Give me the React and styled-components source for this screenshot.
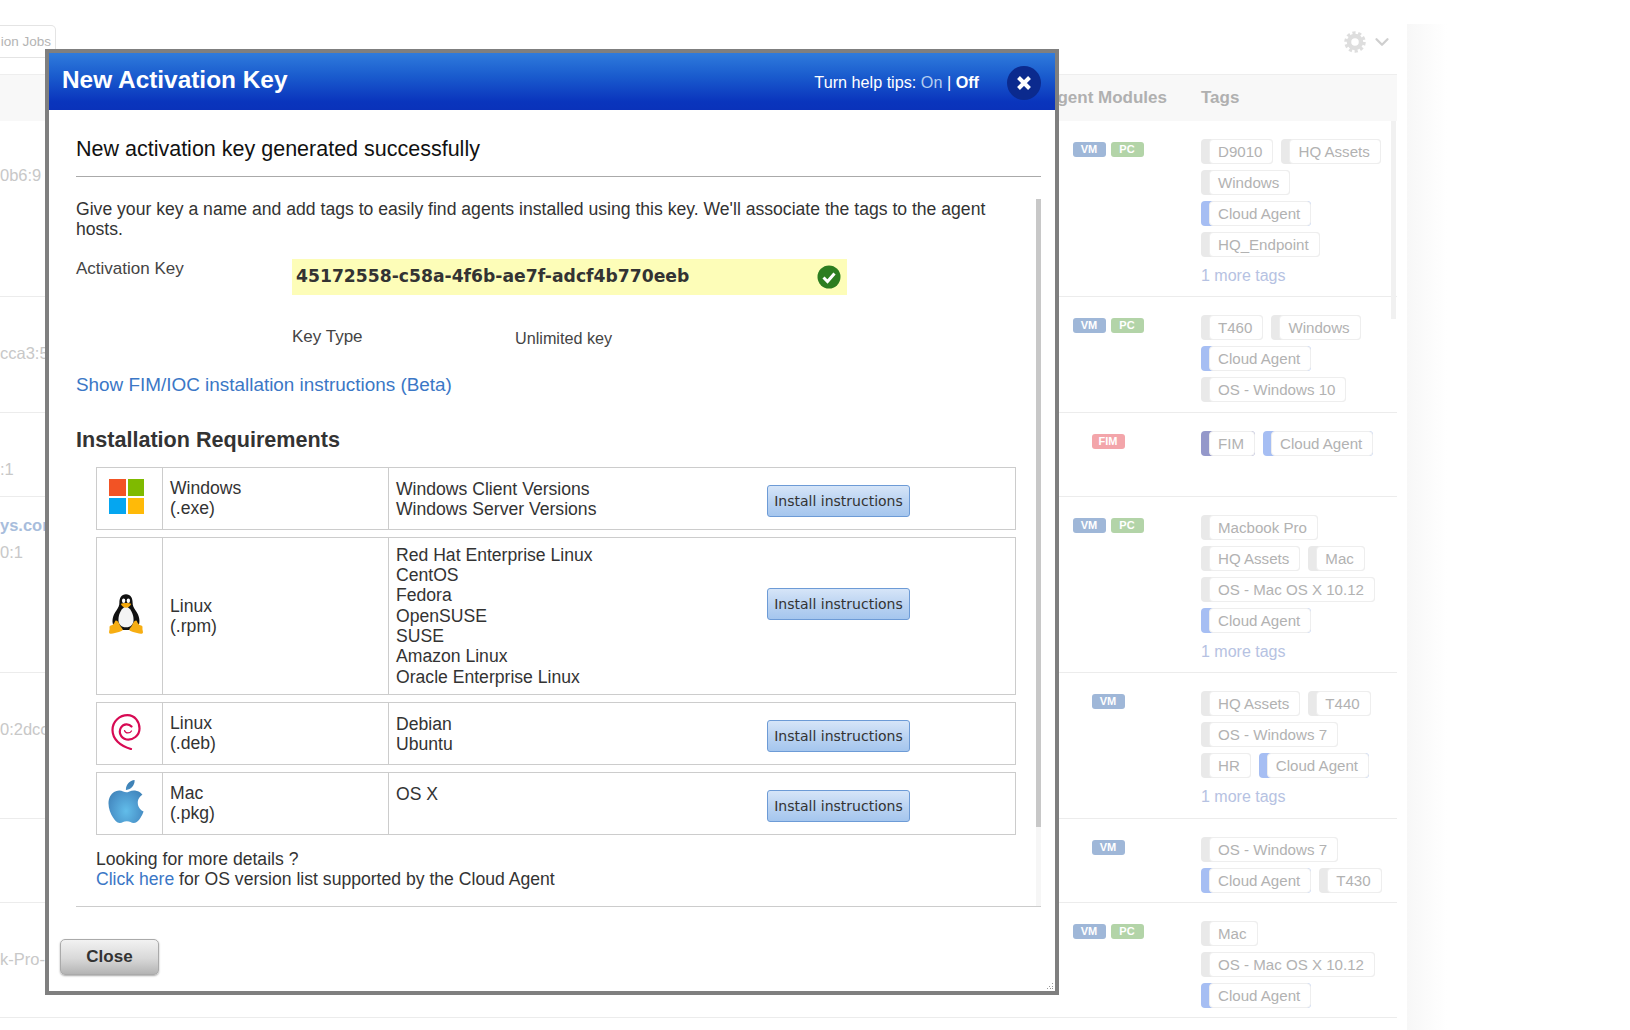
import React from 'react';
import styled, { createGlobalStyle } from 'styled-components';
import { ChevronDown } from 'lucide-react';

const GlobalStyle = createGlobalStyle`
  html, body {
    margin: 0;
    padding: 0;
    background: #fff;
    overflow: hidden;
  }
  body {
    font-family: "Liberation Sans", Arial, sans-serif;
  }
`;

const Page = styled.div`
  position: relative;
  display: flex;
  width: 1630px;
  height: 1030px;
  overflow: hidden;
`;

const Main = styled.div`
  position: relative;
  width: 1397px;
  flex-shrink: 0;
`;

const SideStrip = styled.div`
  width: 40px;
  margin: 24px 0 0 10px;
  background: linear-gradient(90deg, #f7f7f7, #fff);
`;

const TabBar = styled.div`
  display: flex;
  justify-content: space-between;
  height: 57px;
  padding-top: 25px;
  box-sizing: border-box;
`;

const TabStub = styled.div`
  width: 56px;
  height: 33px;
  box-sizing: border-box;
  border: 1px solid #e4e4e4;
  border-left: 0;
  border-radius: 0 5px 0 0;
  font-size: 13.5px;
  line-height: 31px;
  color: #b4b4b4;
  white-space: nowrap;
  text-align: right;
  padding-right: 4px;
  overflow: hidden;
`;

const Tools = styled.div`
  display: flex;
  align-items: center;
  gap: 5px;
  height: 24px;
  padding: 5px 4px 0 0;
`;

const TableHead = styled.div`
  display: grid;
  grid-template-columns: 45px 975px 181px 1fr;
  height: 47px;
  margin-top: 17px;
  align-items: center;
  box-sizing: border-box;
  background: #f8f8f8;
  border-top: 1px solid #eee;
  font-size: 17px;
  font-weight: bold;
  color: #b0b0b0;
`;

const ModulesHead = styled.div`
  grid-column: 3;
  text-align: right;
  padding-right: 34px;
  white-space: nowrap;
`;

const Row = styled.div`
  display: grid;
  grid-template-columns: 45px 975px 181px 1fr;
  height: ${(p) => p.$height}px;
  box-sizing: border-box;
  border-bottom: 1px solid #ececec;
`;

const HostCell = styled.div`
  grid-column: 1;
  padding-top: ${(p) => p.$top}px;
  font-size: 16.5px;
  line-height: 20px;
  color: #c8c8c8;
  white-space: nowrap;
`;

const HostLink = styled.div`
  color: #a8bddc;
  font-weight: bold;
  margin-bottom: 7px;
`;

const ModulesCell = styled.div`
  grid-column: 3;
  display: flex;
  justify-content: center;
  gap: 5px;
  padding: 21px 5px 0 0;
`;

const Badge = styled.span`
  width: 33px;
  height: 15px;
  border-radius: 3px;
  background: ${(p) => p.$bg};
  color: #fff;
  font-size: 11px;
  font-weight: bold;
  line-height: 15px;
  text-align: center;
`;

const TagsCell = styled.div`
  grid-column: 4;
  padding-top: 18px;
`;

const TagLine = styled.div`
  display: flex;
  gap: 8px;
  height: 31px;
`;

const Tag = styled.span`
  height: 25px;
  padding-left: 8px;
  border-radius: 4px;
  background: ${(p) => p.$bar || '#e9e9e9'};
`;

const TagBody = styled.span`
  display: block;
  height: 25px;
  box-sizing: border-box;
  border: 1px solid #eee;
  border-radius: 4px;
  background: #fff;
  padding: 0 10px 0 8px;
  font-size: 15.1px;
  line-height: 23px;
  color: #b2b2b2;
  white-space: nowrap;
`;

const MoreTags = styled.div`
  margin-top: 2px;
  font-size: 16px;
  line-height: 22px;
  color: #b6c2e2;
`;

const PageScroll = styled.div`
  position: absolute;
  right: 1px;
  top: 121px;
  width: 5px;
  height: 198px;
  background: #f1f1f1;
`;

const Modal = styled.div`
  position: absolute;
  left: 45px;
  top: 49px;
  width: 1014px;
  height: 946px;
  box-sizing: border-box;
  border: 4px solid #7f7f7f;
  background: #fff;
  display: flex;
  flex-direction: column;
  color: #333;
`;

const ModalHeader = styled.div`
  display: flex;
  align-items: center;
  height: 57px;
  flex-shrink: 0;
  padding: 0 14px 0 13px;
  background: linear-gradient(180deg, #2f7bdc 0%, #1a5cce 40%, #0a35bd 85%, #0a32ba 100%);
  color: #fff;
`;

const ModalTitle = styled.div`
  flex: 1;
  font-size: 24.4px;
  font-weight: bold;
  position: relative;
  top: -2px;
`;

const HelpTips = styled.div`
  font-size: 16.2px;
  margin-right: 28px;
  position: relative;
  top: 1px;
`;

const HelpOn = styled.span`
  color: #b4cdf0;
`;

const HelpOff = styled.b`
  color: #fff;
`;

const CloseRound = styled.div`
  width: 34px;
  height: 34px;
  border-radius: 50%;
  background: #0b2a8e;
  display: flex;
  align-items: center;
  justify-content: center;
  position: relative;
  top: 1px;
`;

const SuccessHeading = styled.div`
  height: 66px;
  flex-shrink: 0;
  margin-left: 27px;
  padding-top: 21px;
  box-sizing: border-box;
  font-size: 21.5px;
  line-height: 36px;
  color: #111;
`;

const ScrollArea = styled.div`
  display: flex;
  height: 731px;
  flex-shrink: 0;
  margin: 0 14px 0 27px;
  box-sizing: border-box;
  border-top: 1px solid #aaa;
  border-bottom: 1px solid #ccc;
`;

const ScrollContent = styled.div`
  flex: 1;
  padding-top: 22px;
  font-size: 17.6px;
  line-height: 20.3px;
`;

const Scrollbar = styled.div`
  width: 5px;
  margin-top: 22px;
  background: #f6f6f6;
`;

const ScrollThumb = styled.div`
  height: 628px;
  background: #c8c8c8;
`;

const Intro = styled.p`
  margin: 0;
  padding-right: 20px;
`;

const KeyRow = styled.div`
  display: flex;
  margin-top: 19px;
`;

const KeyLabel = styled.div`
  width: 216px;
  font-size: 17px;
  color: #444;
`;

const KeyBox = styled.div`
  display: flex;
  align-items: center;
  justify-content: space-between;
  width: 555px;
  height: 36px;
  box-sizing: border-box;
  padding: 0 6px 0 4px;
  background: #fdfdb8;
  font-family: "DejaVu Sans", sans-serif;
  font-size: 17.2px;
  font-weight: bold;
  color: #333;
`;

const TypeRow = styled.div`
  display: flex;
  margin: 32px 0 0 216px;
`;

const TypeLabel = styled.div`
  width: 223px;
  font-size: 17px;
  color: #444;
`;

const TypeValue = styled.div`
  padding-top: 1px;
  font-size: 16.2px;
  color: #444;
`;

const BetaLink = styled.a`
  display: block;
  margin-top: 26px;
  font-size: 18.9px;
  line-height: 22px;
  color: #3b77c6;
`;

const SectionTitle = styled.div`
  margin-top: 31px;
  font-size: 21.6px;
  line-height: 26px;
  font-weight: bold;
  color: #333;
`;

const ReqList = styled.div`
  display: flex;
  flex-direction: column;
  gap: 7px;
  margin: 14px 20px 0 20px;
`;

const ReqRow = styled.div`
  display: grid;
  grid-template-columns: 66px 226px 1fr;
  box-sizing: border-box;
  border: 1px solid #ccc;
  min-height: ${(p) => p.$height}px;
`;

const IconCell = styled.div`
  display: flex;
  align-items: center;
  justify-content: center;
  padding: 0 7px 3px 0;
  border-right: 1px solid #ccc;
`;

const NameCell = styled.div`
  display: flex;
  flex-direction: column;
  justify-content: center;
  padding-left: 7px;
  border-right: 1px solid #ccc;
`;

const VersionCell = styled.div`
  display: flex;
  align-items: flex-start;
  padding: ${(p) => p.$top}px 0 0 7px;
`;

const Versions = styled.div`
  width: 371px;
`;

const InstallButton = styled.button`
  width: 143px;
  height: 32px;
  margin-top: ${(p) => p.$offset}px;
  box-sizing: border-box;
  border: 1px solid #6d9bd6;
  border-radius: 3px;
  background: linear-gradient(180deg, #d6e5f8 0%, #b9d2f1 55%, #a5c6ee 100%);
  font-family: "DejaVu Sans", sans-serif;
  font-size: 14px;
  color: #333;
  padding: 0;
`;

const MoreDetails = styled.div`
  margin: 14px 0 0 20px;
`;

const TextLink = styled.a`
  color: #3b77c6;
`;

const Footer = styled.div`
  position: relative;
  flex: 1;
  padding: 32px 0 0 11px;
`;

const CloseButton = styled.button`
  width: 99px;
  height: 36px;
  padding: 0;
  border: 1px solid #aaa;
  border-radius: 5px;
  background: linear-gradient(180deg, #f2f2f2 0%, #d8d8d8 55%, #b4b4b4 100%);
  box-shadow: 0 1px 2px rgba(0, 0, 0, 0.35);
  font-family: "Liberation Sans", Arial, sans-serif;
  font-size: 17px;
  font-weight: bold;
  color: #333;
`;

const Grip = styled.svg`
  position: absolute;
  right: 1px;
  bottom: 1px;
`;

const GearIcon = () => (
  <svg width="22" height="22" viewBox="0 0 22 22" fill="none" stroke="#dedede">
    <circle cx="11" cy="11" r="6" strokeWidth="4.500" />
    <circle cx="11" cy="11" r="9" strokeWidth="3.500" strokeDasharray="3.100 2.555" />
  </svg>
);

const WindowsIcon = () => (
  <svg width="35" height="35" viewBox="0 0 35 35">
    <rect x="0" y="0" width="17" height="17" fill="#f25325" />
    <rect x="19" y="0" width="16" height="17" fill="#7fba00" />
    <rect x="0" y="19" width="17" height="16" fill="#05a6f0" />
    <rect x="19" y="19" width="16" height="16" fill="#ffba08" />
  </svg>
);

const TuxIcon = () => (
  <svg width="34" height="42" viewBox="0 0 36 42">
    <path d="M18 0c-5 0-7 4-7 9 0 3-1 5-3 8-3 4-5 9-4 14 1 4 5 7 14 7s13-3 14-7c1-5-1-10-4-14-2-3-3-5-3-8 0-5-2-9-7-9z" fill="#111" />
    <path d="M18 13c-4 1-8 7-8 14 0 5 3 8 8 8s8-3 8-8c0-7-4-13-8-14z" fill="#f4f4f4" />
    <ellipse cx="15.500" cy="7" rx="1.800" ry="2.300" fill="#fff" />
    <ellipse cx="20.500" cy="7" rx="1.800" ry="2.300" fill="#fff" />
    <path d="M12.500 10.500c2-1.500 9-1.500 11 0-1 2.500-3.500 4-5.500 4s-4.500-1.500-5.500-4z" fill="#f5a90c" />
    <path d="M7 28c2 0 3.500 2 4.500 5 1 2 2.500 3 3 4.500.3 1.500-2 2-4 2.500-3 .6-6 2-9 1.800-2-.2-1.500-2-1-4 .3-2-.4-3 .6-4.300 1.500-1 3-.5 3.500-2C6 31 6 29 7 28z" fill="#f7ae12" />
    <path d="M29 28c-2 0-3.500 2-4.500 5-1 2-2.500 3-3 4.500-.3 1.500 2 2 4 2.500 3 .6 6 2 9 1.800 2-.2 1.500-2 1-4-.3-2 .4-3-.6-4.300-1.500-1-3-.5-3.500-2C30 31 30 29 29 28z" fill="#f7ae12" />
  </svg>
);

const DebianIcon = () => (
  <svg width="30" height="36" viewBox="0 0 30 36" fill="none" stroke="#d70a53" strokeLinecap="round">
    <path d="M20 35C9 32 1.500 25 1.500 16 1.500 7 9 1.200 16.500 1.200 24 1.200 28.500 8 28.500 14.500 28.500 21.500 22 26.500 15.500 25.500 9 24 7.500 17.500 10 13.500 12.500 9.500 18 9.500 20.500 12.500" strokeWidth="2.200" />
    <path d="M20.500 17c-1.500 2.500-6 2.800-7-.5" strokeWidth="1.200" />
  </svg>
);

const AppleIcon = () => (
  <svg width="38" height="43" viewBox="2.500 0 19 24">
    <defs>
      <radialGradient id="appleBlue" cx="50%" cy="72%" r="62%">
        <stop offset="0%" stopColor="#62bdea" />
        <stop offset="70%" stopColor="#4a93c9" />
        <stop offset="100%" stopColor="#3f82b6" />
      </radialGradient>
    </defs>
    <path
      fill="url(#appleBlue)"
      d="M12.152 6.896c-.948 0-2.415-1.078-3.96-1.04-2.04.027-3.91 1.183-4.961 3.014-2.117 3.675-.546 9.103 1.519 12.09 1.013 1.454 2.208 3.09 3.792 3.039 1.52-.065 2.09-.987 3.935-.987 1.831 0 2.35.987 3.96.948 1.637-.026 2.676-1.48 3.676-2.948 1.156-1.688 1.636-3.325 1.662-3.415-.039-.013-3.182-1.221-3.22-4.857-.026-3.04 2.48-4.494 2.597-4.559-1.429-2.09-3.623-2.324-4.39-2.376-2-.156-3.675 1.09-4.61 1.09zM15.53 3.83c.843-1.012 1.4-2.427 1.245-3.83-1.207.052-2.662.805-3.532 1.818-.78.896-1.454 2.338-1.273 3.714 1.338.104 2.715-.688 3.559-1.701"
    />
  </svg>
);

const CheckIcon = () => (
  <svg width="24" height="24" viewBox="0 0 24 24">
    <circle cx="12" cy="12" r="11.500" fill="#2c7d20" />
    <path d="M6.500 12.500l4 4 7-8" fill="none" stroke="#fff" strokeWidth="3" />
  </svg>
);

const BLUE = '#a6bef3';
const PURPLE = '#9498ca';

const rows = [
  {
    height: 176,
    top: 44,
    host: ['0b6:9'],
    modules: ['VM', 'PC'],
    tags: [
      [{ t: 'D9010' }, { t: 'HQ Assets' }],
      [{ t: 'Windows' }],
      [{ t: 'Cloud Agent', bar: BLUE }],
      [{ t: 'HQ_Endpoint' }],
    ],
    more: true,
  },
  {
    height: 116,
    top: 46,
    host: ['cca3:5'],
    modules: ['VM', 'PC'],
    tags: [
      [{ t: 'T460' }, { t: 'Windows' }],
      [{ t: 'Cloud Agent', bar: BLUE }],
      [{ t: 'OS - Windows 10' }],
    ],
  },
  {
    height: 84,
    top: 46,
    host: [':1'],
    modules: ['FIM'],
    tags: [[{ t: 'FIM', bar: PURPLE }, { t: 'Cloud Agent', bar: BLUE }]],
  },
  {
    height: 176,
    top: 18,
    link: 'ys.con',
    host: ['0:1'],
    modules: ['VM', 'PC'],
    tags: [
      [{ t: 'Macbook Pro' }],
      [{ t: 'HQ Assets' }, { t: 'Mac' }],
      [{ t: 'OS - Mac OS X 10.12' }],
      [{ t: 'Cloud Agent', bar: BLUE }],
    ],
    more: true,
  },
  {
    height: 146,
    top: 46,
    host: ['0:2dcc'],
    modules: ['VM'],
    tags: [
      [{ t: 'HQ Assets' }, { t: 'T440' }],
      [{ t: 'OS - Windows 7' }],
      [{ t: 'HR' }, { t: 'Cloud Agent', bar: BLUE }],
    ],
    more: true,
  },
  {
    height: 84,
    top: 46,
    host: [],
    modules: ['VM'],
    tags: [
      [{ t: 'OS - Windows 7' }],
      [{ t: 'Cloud Agent', bar: BLUE }, { t: 'T430' }],
    ],
  },
  {
    height: 115,
    top: 46,
    host: ['k-Pro-'],
    modules: ['VM', 'PC'],
    tags: [
      [{ t: 'Mac' }],
      [{ t: 'OS - Mac OS X 10.12' }],
      [{ t: 'Cloud Agent', bar: BLUE }],
    ],
  },
];

const badgeColors = { VM: '#9fb7d8', PC: '#b3d4a8', FIM: '#f3a5aa' };

const requirements = [
  {
    icon: <WindowsIcon />,
    name: 'Windows',
    ext: '(.exe)',
    versions: ['Windows Client Versions', 'Windows Server Versions'],
    height: 63,
    top: 11,
    offset: 6,
  },
  {
    icon: <TuxIcon />,
    name: 'Linux',
    ext: '(.rpm)',
    versions: [
      'Red Hat Enterprise Linux',
      'CentOS',
      'Fedora',
      'OpenSUSE',
      'SUSE',
      'Amazon Linux',
      'Oracle Enterprise Linux',
    ],
    height: 158,
    top: 7,
    offset: 43,
  },
  {
    icon: <DebianIcon />,
    name: 'Linux',
    ext: '(.deb)',
    versions: ['Debian', 'Ubuntu'],
    height: 63,
    top: 11,
    offset: 6,
  },
  {
    icon: <AppleIcon />,
    name: 'Mac',
    ext: '(.pkg)',
    versions: ['OS X'],
    height: 63,
    top: 11,
    offset: 6,
  },
];

export default function App() {
  return (
    <Page>
      <GlobalStyle />
      <Main>
        <TabBar>
          <TabStub>ion Jobs</TabStub>
          <Tools>
            <GearIcon />
            <ChevronDown size={22} strokeWidth={2.5} color="#cfcfcf" />
          </Tools>
        </TabBar>
        <TableHead>
          <ModulesHead>Agent Modules</ModulesHead>
          <div>Tags</div>
        </TableHead>
        {rows.map((row, i) => (
          <Row key={i} $height={row.height}>
            <HostCell $top={row.top}>
              {row.link && <HostLink>{row.link}</HostLink>}
              {row.host.map((h) => (
                <div key={h}>{h}</div>
              ))}
            </HostCell>
            <ModulesCell>
              {row.modules.map((m) => (
                <Badge key={m} $bg={badgeColors[m]}>
                  {m}
                </Badge>
              ))}
            </ModulesCell>
            <TagsCell>
              {row.tags.map((line, j) => (
                <TagLine key={j}>
                  {line.map((tag) => (
                    <Tag key={tag.t} $bar={tag.bar}>
                      <TagBody>{tag.t}</TagBody>
                    </Tag>
                  ))}
                </TagLine>
              ))}
              {row.more && <MoreTags>1 more tags</MoreTags>}
            </TagsCell>
          </Row>
        ))}
        <PageScroll />
      </Main>
      <SideStrip />

      <Modal>
        <ModalHeader>
          <ModalTitle>New Activation Key</ModalTitle>
          <HelpTips>
            Turn help tips: <HelpOn>On</HelpOn> | <HelpOff>Off</HelpOff>
          </HelpTips>
          <CloseRound>
            <svg width="16" height="16" viewBox="0 0 16 16">
              <path d="M2.500 2.500l11 11M13.500 2.500l-11 11" stroke="#fff" strokeWidth="4" />
            </svg>
          </CloseRound>
        </ModalHeader>
        <SuccessHeading>New activation key generated successfully</SuccessHeading>
        <ScrollArea>
          <ScrollContent>
            <Intro>
              Give your key a name and add tags to easily find agents installed using this key. We'll
              associate the tags to the agent hosts.
            </Intro>
            <KeyRow>
              <KeyLabel>Activation Key</KeyLabel>
              <KeyBox>
                <span>45172558-c58a-4f6b-ae7f-adcf4b770eeb</span>
                <CheckIcon />
              </KeyBox>
            </KeyRow>
            <TypeRow>
              <TypeLabel>Key Type</TypeLabel>
              <TypeValue>Unlimited key</TypeValue>
            </TypeRow>
            <BetaLink>Show FIM/IOC installation instructions (Beta)</BetaLink>
            <SectionTitle>Installation Requirements</SectionTitle>
            <ReqList>
              {requirements.map((req, i) => (
                <ReqRow key={i} $height={req.height}>
                  <IconCell>{req.icon}</IconCell>
                  <NameCell>
                    <div>{req.name}</div>
                    <div>{req.ext}</div>
                  </NameCell>
                  <VersionCell $top={req.top}>
                    <Versions>
                      {req.versions.map((v) => (
                        <div key={v}>{v}</div>
                      ))}
                    </Versions>
                    <InstallButton $offset={req.offset}>Install instructions</InstallButton>
                  </VersionCell>
                </ReqRow>
              ))}
            </ReqList>
            <MoreDetails>
              Looking for more details ?
              <br />
              <TextLink>Click here</TextLink> for OS version list supported by the Cloud Agent
            </MoreDetails>
          </ScrollContent>
          <Scrollbar>
            <ScrollThumb />
          </Scrollbar>
        </ScrollArea>
        <Footer>
          <CloseButton>Close</CloseButton>
          <Grip width="8" height="8" viewBox="0 0 8 8">
            <path d="M6 1h1v1H6zM3 4h1v1H3zM6 4h1v1H6zM1 6h1v1H1zM4 6h1v1H4zM6 6h1v1H6z" fill="#999" />
          </Grip>
        </Footer>
      </Modal>
    </Page>
  );
}
